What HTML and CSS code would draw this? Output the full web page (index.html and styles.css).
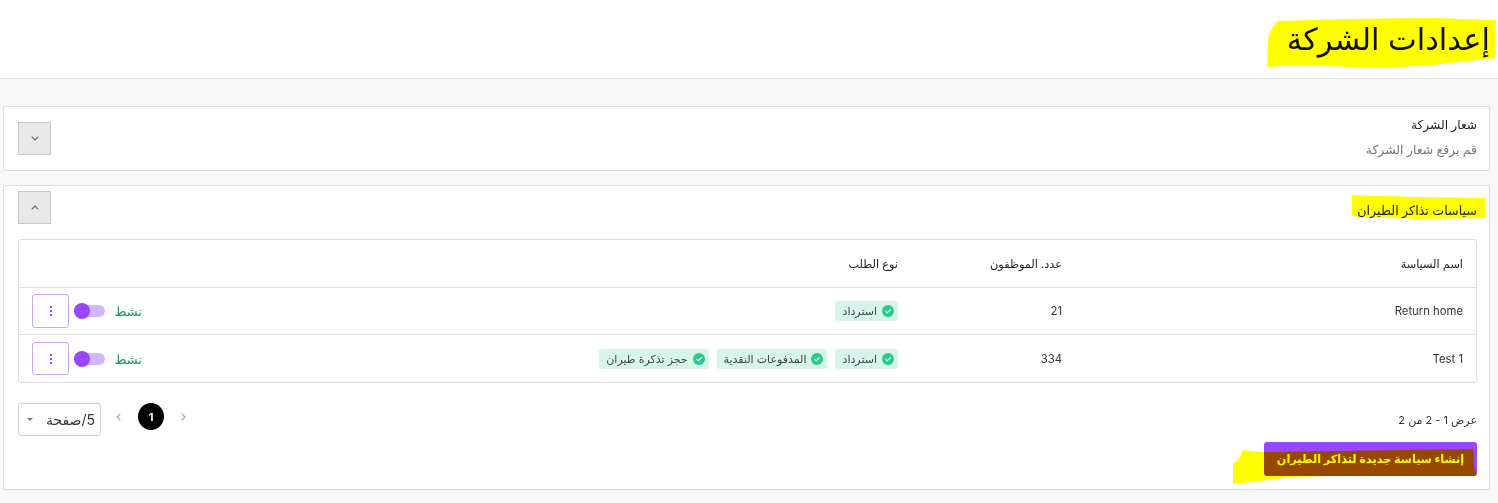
FILE: index.html
```html
<!DOCTYPE html>
<html lang="ar" dir="rtl">
<head>
    <meta charset="UTF-8">
    <meta name="viewport" content="width=device-width, initial-scale=1.0">
    <title>إعدادات الشركة</title>
    <link rel="stylesheet" href="styles.css">
</head>
<body>
    <header class="page-header">
        <h1>إعدادات الشركة</h1>
    </header>

    <main class="content">
        <section class="card card-logo">
            <div class="card-text">
                <h2>شعار الشركة</h2>
                <p>قم برفع شعار الشركة</p>
            </div>
            <button class="toggle-btn" type="button">
                <svg width="8" height="5" viewBox="0 0 8 5"><path d="M.7.7L4 4 7.3.7" fill="none" stroke="#666" stroke-width="1.2"/></svg>
            </button>
        </section>

        <section class="card card-policies">
            <div class="card-head">
                <h2>سياسات تذاكر الطيران</h2>
                <button class="toggle-btn" type="button">
                    <svg width="8" height="5" viewBox="0 0 8 5"><path d="M.7 4.3L4 1l3.3 3.3" fill="none" stroke="#666" stroke-width="1.2"/></svg>
                </button>
            </div>

            <div class="table">
                <div class="row row-head">
                    <div>اسم السياسة</div>
                    <div>عدد. الموظفون</div>
                    <div>نوع الطلب</div>
                    <div></div>
                </div>
                <div class="row row-one">
                    <div>Return home</div>
                    <div>21</div>
                    <div class="chips">
                        <span class="chip"><svg class="check" viewBox="0 0 12 12"><circle cx="6" cy="6" r="6"/><path d="M3.4 6.2l1.8 1.8 3.4-3.6"/></svg>استرداد</span>
                    </div>
                    <div class="actions">
                        <span class="status">نشط</span>
                        <span class="switch"><span class="knob"></span></span>
                        <button class="menu-btn" type="button"><span class="dots"></span></button>
                    </div>
                </div>
                <div class="row row-two">
                    <div>Test 1</div>
                    <div>334</div>
                    <div class="chips">
                        <span class="chip"><svg class="check" viewBox="0 0 12 12"><circle cx="6" cy="6" r="6"/><path d="M3.4 6.2l1.8 1.8 3.4-3.6"/></svg>استرداد</span>
                        <span class="chip"><svg class="check" viewBox="0 0 12 12"><circle cx="6" cy="6" r="6"/><path d="M3.4 6.2l1.8 1.8 3.4-3.6"/></svg>المدفوعات النقدية</span>
                        <span class="chip"><svg class="check" viewBox="0 0 12 12"><circle cx="6" cy="6" r="6"/><path d="M3.4 6.2l1.8 1.8 3.4-3.6"/></svg>حجز تذكرة طيران</span>
                    </div>
                    <div class="actions">
                        <span class="status">نشط</span>
                        <span class="switch"><span class="knob"></span></span>
                        <button class="menu-btn" type="button"><span class="dots"></span></button>
                    </div>
                </div>
            </div>

            <div class="pager-row">
                <span class="pager-info">عرض 1 - 2 من 2</span>
                <div class="pager">
                    <svg class="arrow" width="5" height="8" viewBox="0 0 5 8"><path d="M.7.7L4 4 .7 7.3"/></svg>
                    <span class="page-num">1</span>
                    <svg class="arrow" width="5" height="8" viewBox="0 0 5 8"><path d="M4.3.7L1 4l3.3 3.3"/></svg>
                    <div class="page-size">
                        <span>5/صفحة</span>
                        <span class="caret"></span>
                    </div>
                </div>
            </div>

            <button class="create-btn" type="button">إنشاء سياسة جديدة لتذاكر الطيران</button>
        </section>
    </main>

    <!-- highlighter marks drawn over the screenshot -->
    <svg class="marks" width="1498" height="503" viewBox="0 0 1498 503">
        <path d="M1278 21L1340 19 1433 18 1495 20 1495 58 1433 65 1383 68 1300 65 1267 67 1268 40Q1270 28 1278 21z"/>
        <path d="M1352 195L1420 197 1485 198 1485 218 1420 219 1358 217 1352 215z"/>
        <path d="M1243 450L1263 452 1473 449 1474 468 1477 476 1327 476 1293 477 1233 484 1233 463 1238 461z"/>
    </svg>
</body>
</html>
```

FILE: styles.css
```css
* {
    box-sizing: border-box;
}
body {
    position: relative;
    margin: 0;
    height: 503px;
    overflow: hidden;
    background-color: #f8f8f8;
    color: #222;
    font-family: Inter, "DejaVu Sans", sans-serif;
    font-size: 11px;
}
button {
    font-family: inherit;
    cursor: pointer;
}
.page-header {
    height: 79px;
    padding: 16px 8px 0;
    background: #fff;
    border-bottom: 1px solid #e3e3e3;
}
.page-header h1 {
    margin: 0;
    font-size: 30.5px;
    font-weight: 400;
    line-height: 46px;
    color: #111;
}
.content {
    padding: 27px 8px 0 3px;
}
.card {
    background: #fff;
    border: 1px solid #ddd;
    border-radius: 2px;
}
.card h2 {
    margin: 0;
    font-size: 12.2px;
    font-weight: 500;
    color: #222;
}
.card-logo {
    display: flex;
    justify-content: space-between;
    align-items: center;
    height: 65px;
    padding: 0 12px 0 14px;
    margin-bottom: 14px;
}
.card-text {
    padding-bottom: 3px;
}
.card-text p {
    margin: 10px 0 0;
    font-size: 12.4px;
    color: #777;
}
.toggle-btn {
    display: flex;
    justify-content: center;
    align-items: center;
    width: 33px;
    height: 33px;
    padding: 0;
    background: #e8e8e8;
    border: 1px solid #c8c8c8;
}
.card-policies {
    height: 305px;
    padding: 0 12px 0 14px;
}
.card-head {
    display: flex;
    justify-content: space-between;
    align-items: flex-start;
    height: 53px;
    padding-top: 5px;
}
.card-head h2 {
    margin-top: 12px;
    font-size: 12.7px;
}
.table {
    background: #fff;
    border: 1px solid #ddd;
    border-radius: 3px;
}
.row {
    display: grid;
    grid-template-columns: 401px 164px 1fr 110px;
    align-items: center;
    padding: 0 13px;
    border-bottom: 1px solid #e0e0e0;
    color: #333;
    font-size: 11.3px;
}
.row:last-child {
    border-bottom: 0;
}
.row-head {
    height: 48px;
    color: #222;
}
.row-one {
    height: 47px;
}
.row-two {
    height: 47px;
}
.chips {
    display: flex;
    gap: 8px;
}
.chip {
    display: flex;
    align-items: center;
    gap: 5px;
    height: 20px;
    padding: 0 4px 0 7px;
    background: #d4f5e8;
    border-radius: 3px;
    color: #444;
    font-size: 11px;
}
.check {
    width: 12px;
    height: 12px;
}
.check circle {
    fill: #2bc990;
}
.check path {
    fill: none;
    stroke: #e4fbf2;
    stroke-width: 1.2;
}
.actions {
    display: flex;
    align-items: center;
}
.status {
    width: 37px;
    font-size: 13px;
    color: #1d8f72;
}
.switch {
    position: relative;
    width: 31px;
    height: 12px;
    margin-left: 5px;
    background: #d2b5fb;
    border-radius: 6px;
}
.knob {
    position: absolute;
    top: -2px;
    left: 0;
    width: 16px;
    height: 16px;
    background: #9747ff;
    border-radius: 50%;
}
.menu-btn {
    display: flex;
    justify-content: center;
    align-items: center;
    width: 37px;
    height: 33px;
    padding: 0;
    background: #fff;
    border: 1px solid #c9a5fb;
    border-radius: 3px;
}
.row-one .menu-btn {
    height: 34px;
}
.dots {
    width: 2px;
    height: 2px;
    background: #9747ff;
    box-shadow: 0 -4px 0 #9747ff, 0 4px 0 #9747ff;
}
.pager-row {
    display: flex;
    justify-content: space-between;
    align-items: center;
    margin-top: 20px;
}
.pager-info {
    color: #333;
}
.pager {
    display: flex;
    align-items: flex-start;
}
.arrow {
    margin-top: 10px;
    fill: none;
    stroke: #aaa;
    stroke-width: 1.2;
}
.page-num {
    display: flex;
    justify-content: center;
    align-items: center;
    width: 26px;
    height: 27px;
    margin: 0 17px;
    background: #000;
    border-radius: 50%;
    color: #fff;
    font-weight: 700;
}
.page-size {
    display: flex;
    justify-content: space-between;
    align-items: center;
    width: 83px;
    height: 33px;
    margin-right: 15px;
    padding: 0 5px 0 8px;
    background: #fff;
    border: 1px solid #ccc;
    border-radius: 3px;
    font-size: 14px;
    color: #333;
}
.caret {
    width: 0;
    height: 0;
    border: 3px solid transparent;
    border-top: 3px solid #777;
    border-bottom: 0;
}
.create-btn {
    display: block;
    width: 213px;
    height: 34px;
    margin-top: 6px;
    padding: 0;
    background: #9747ff;
    border: 0;
    border-radius: 3px;
    color: #fff;
    font-size: 11.3px;
    font-weight: 700;
}
.marks {
    position: absolute;
    top: 0;
    left: 0;
    fill: #ff0;
    mix-blend-mode: multiply;
    pointer-events: none;
}
```
